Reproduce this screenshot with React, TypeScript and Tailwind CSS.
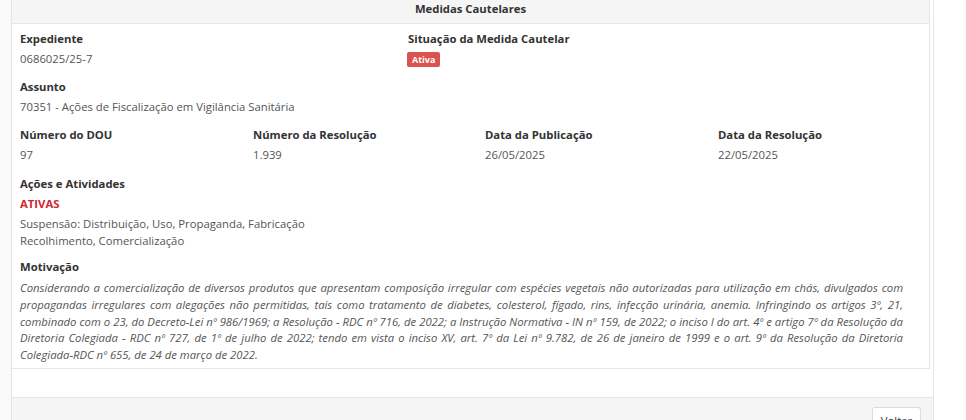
import React from "react";

const Label = ({ children }: { children: React.ReactNode }) => (
  <div className="text-[11.3px] leading-[17px] font-bold text-[#333]">{children}</div>
);
const Value = ({ children }: { children: React.ReactNode }) => (
  <div className="mt-[3px] text-[11.3px] leading-[17px] text-[#555]">{children}</div>
);

export default function App() {
  return (
    <div className="w-[966px] h-[420px] bg-white overflow-hidden font-['Open_Sans',sans-serif] flex">
      <div className="w-[11px] h-full bg-[#f9f9f9]" />
      <div className="w-[923px] h-full border-l border-r border-[#e6e6e6] flex flex-col">
        <div className="shrink-0 mr-[3px] border-r border-b border-[#e6e6e6]">
          <div className="h-[24px] bg-[#f5f5f5] border-b border-[#e6e6e6] text-center text-[11.3px] leading-[18px] font-bold text-[#333]">
            Medidas Cautelares
          </div>
          <div className="pl-[8px] pt-[6px] pb-[4px]">
            <div className="flex">
              <div className="w-[388px]">
                <Label>Expediente</Label>
                <Value>0686025/25-7</Value>
              </div>
              <div>
                <Label>Situação da Medida Cautelar</Label>
                <div className="mt-[5px] h-[15px] flex">
                  <span className="inline-flex items-center -ml-[1px] h-[15px] px-[5px] rounded-[2px] bg-[#d9534f] text-white text-[9px] font-bold leading-none">
                    Ativa
                  </span>
                </div>
              </div>
            </div>
            <div className="mt-[11px]">
              <Label>Assunto</Label>
              <Value>70351 - Ações de Fiscalização em Vigilância Sanitária</Value>
            </div>
            <div className="mt-[11px] grid grid-cols-[233px_232px_233px_233px]">
              <div>
                <Label>Número do DOU</Label>
                <Value>97</Value>
              </div>
              <div>
                <Label>Número da Resolução</Label>
                <Value>1.939</Value>
              </div>
              <div>
                <Label>Data da Publicação</Label>
                <Value>26/05/2025</Value>
              </div>
              <div>
                <Label>Data da Resolução</Label>
                <Value>22/05/2025</Value>
              </div>
            </div>
            <div className="mt-[12px]">
              <Label>Ações e Atividades</Label>
              <div className="mt-[3px] text-[11.3px] leading-[17px] font-bold text-[#d0262f]">ATIVAS</div>
              <div className="mt-[3px] text-[11.3px] leading-[17px] text-[#555]">
                <div>Suspensão: Distribuição, Uso, Propaganda, Fabricação</div>
                <div>Recolhimento, Comercialização</div>
              </div>
            </div>
            <div className="mt-[9px]">
              <Label>Motivação</Label>
              <p className="mt-[5px] w-[883px] text-[11.3px] leading-[16.8px] italic text-[#555] text-justify">
                Considerando a comercialização de diversos produtos que apresentam composição irregular com espécies vegetais não autorizadas para utilização em chás, divulgados com propagandas irregulares com alegações não permitidas, tais como tratamento de diabetes, colesterol, fígado, rins, infecção urinária, anemia. Infringindo os artigos 3º, 21, combinado com o 23, do Decreto-Lei nº 986/1969; a Resolução - RDC nº 716, de 2022; a Instrução Normativa - IN nº 159, de 2022; o inciso I do art. 4º e artigo 7º da Resolução da Diretoria Colegiada - RDC nº 727, de 1º de julho de 2022; tendo em vista o inciso XV, art. 7º da Lei nº 9.782, de 26 de janeiro de 1999 e o art. 9º da Resolução da Diretoria Colegiada-RDC nº 655, de 24 de março de 2022.
              </p>
            </div>
          </div>
        </div>
        <div className="shrink-0 h-[28px]" />
        <div className="shrink-0 h-[60px] bg-[#f5f5f5] border-t border-[#e6e6e6] flex justify-end pr-[12px] pt-[9px]">
          <button className="w-[49px] h-[28px] bg-white border border-[#dcdcdc] rounded-[3px] text-[11.3px] text-[#333] leading-[17px]">
            Voltar
          </button>
        </div>
      </div>
    </div>
  );
}
